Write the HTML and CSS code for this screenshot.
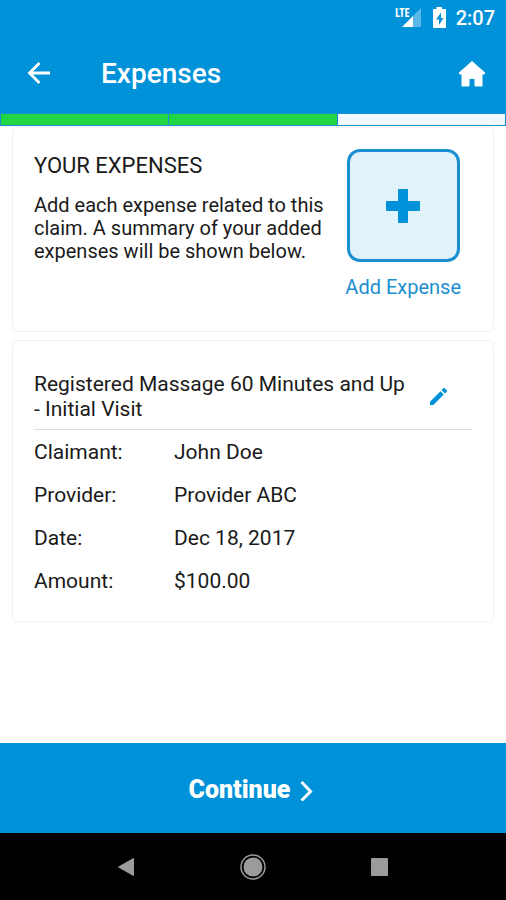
FILE: index.html
```html
<!DOCTYPE html>
<html lang="en">
<head>
<meta charset="utf-8">
<meta name="viewport" content="width=device-width, initial-scale=1">
<title>Expenses</title>
<link rel="stylesheet" href="styles.css">
</head>
<body>
<div class="screen">
  <div class="status-bar">
    <div class="signal">
      <span class="network">LTE</span>
      <svg class="signal-icon" width="19" height="19" viewBox="0 0 19 19" aria-hidden="true">
        <path d="M19 0v19H11V8z" fill="#fff" opacity=".35"/>
        <path d="M11 8v11H0z" fill="#fff"/>
      </svg>
    </div>
    <svg class="battery" width="13" height="21" viewBox="0 0 13 21" aria-hidden="true">
      <path d="M3.500 0h5.500v2H12q1 0 1 1v17q0 1-1 1H1q-1 0-1-1V3q0-1 1-1h2.500z" fill="#fff"/>
      <path d="M8 5.500 3 12.500h3V18l4.500-7H8z" fill="#0092d8"/>
    </svg>
    <span class="clock">2:07</span>
  </div>

  <header class="app-bar">
    <button class="icon-button" type="button" aria-label="Back">
      <svg width="24" height="24" viewBox="0 0 24 24" fill="none" stroke="#fff" stroke-width="2.800" aria-hidden="true">
        <path d="M23 11H2M12.500 1 2.500 11l10 10"/>
      </svg>
    </button>
    <h1 class="title">Expenses</h1>
    <button class="icon-button" type="button" aria-label="Home">
      <svg width="28" height="28" viewBox="0 0 28 28" aria-hidden="true">
        <path d="M14 1.500 27 13 26 14H24V26H17V18.500H11V26H4V14H2L1 13z" fill="#fff" stroke="#fff" stroke-width="1" stroke-linejoin="round"/>
      </svg>
    </button>
  </header>

  <div class="progress" role="progressbar" aria-label="Claim steps" aria-valuemin="0" aria-valuemax="3" aria-valuenow="2">
    <span class="step done"></span>
    <span class="step done"></span>
    <span class="step"></span>
  </div>

  <main class="content">
    <section class="card intro">
      <div class="intro-text">
        <h2 class="heading">YOUR EXPENSES</h2>
        <p class="description">Add each expense related to this claim. A summary of your added expenses will be shown below.</p>
      </div>
      <button class="add" type="button">
        <span class="add-box">
          <svg width="34" height="34" viewBox="0 0 34 34" fill="#0092d8" aria-hidden="true">
            <rect x="12" y="0" width="10" height="34" rx="1"/>
            <rect x="0" y="12" width="34" height="10" rx="1"/>
          </svg>
        </span>
        <span>Add Expense</span>
      </button>
    </section>

    <section class="card expense">
      <div class="expense-head">
        <h2 class="expense-name">Registered Massage 60 Minutes and Up - Initial Visit</h2>
        <button class="icon-button edit" type="button" aria-label="Edit expense">
          <svg width="18" height="18" viewBox="0 0 18 18" fill="#0092d8" aria-hidden="true">
            <path d="M0 13.700V17h3.300L13.800 6.500 10.500 3.200zM16.700 3.700c.4-.4.4-1 0-1.400L14.700.3c-.4-.4-1-.4-1.400 0l-1.800 1.800 3.400 3.400z"/>
          </svg>
        </button>
      </div>
      <dl class="details">
        <dt>Claimant:</dt><dd>John Doe</dd>
        <dt>Provider:</dt><dd>Provider ABC</dd>
        <dt>Date:</dt><dd>Dec 18, 2017</dd>
        <dt>Amount:</dt><dd>$100.00</dd>
      </dl>
    </section>
  </main>

  <button class="continue" type="button">
    <span>Continue</span>
    <svg width="13" height="22" viewBox="0 0 13 22" fill="none" stroke="#fff" stroke-width="3" aria-hidden="true">
      <path d="M1.500 3 10.500 12.500l-9 9"/>
    </svg>
  </button>

  <nav class="system-nav" aria-label="System">
    <button class="icon-button" type="button" aria-label="System back">
      <svg width="18" height="20" viewBox="0 0 18 20" aria-hidden="true">
        <path d="M1.500 10 16.500 1.500v17z" fill="#9b9b9b" stroke="#9b9b9b" stroke-linejoin="round"/>
      </svg>
    </button>
    <button class="icon-button" type="button" aria-label="System home">
      <svg width="26" height="26" viewBox="0 0 26 26" aria-hidden="true">
        <circle cx="13" cy="13" r="12" fill="none" stroke="#9b9b9b" stroke-width="1.500"/>
        <circle cx="13" cy="13" r="9.500" fill="#9b9b9b"/>
      </svg>
    </button>
    <button class="icon-button" type="button" aria-label="Recent apps">
      <svg width="18" height="18" viewBox="0 0 18 18" aria-hidden="true">
        <rect width="17" height="18" rx="1" fill="#9b9b9b"/>
      </svg>
    </button>
  </nav>
</div>
</body>
</html>
```
FILE: styles.css
```css
* { box-sizing: border-box; }

body {
  margin: 0;
  background: #fff;
  color: #1a1a1a;
  font: 400 20px/24px Roboto, sans-serif;
}

h1, h2, p, dl, dd { margin: 0; font-weight: 400; }

button {
  padding: 0;
  border: 0;
  background: none;
  color: inherit;
  font: inherit;
  cursor: pointer;
}

svg { display: block; }

.screen {
  display: flex;
  flex-direction: column;
  min-height: 100vh;
}

.status-bar {
  display: flex;
  justify-content: flex-end;
  align-items: center;
  gap: 12px;
  height: 35px;
  padding: 0 11px 0 12px;
  background: #0092d8;
  color: #fff;
}

.signal { display: flex; align-items: flex-start; }

.network {
  margin-right: -8px;
  font: 700 12px/10px "Open Sans Condensed", "Roboto Condensed", Roboto, sans-serif;
}

.clock { margin-left: -2px; font-weight: 500; }

.app-bar {
  display: flex;
  align-items: center;
  height: 78px;
  padding: 0 20px 0 27px;
  background: #0092d8;
  color: #fff;
}

.title {
  flex: 1;
  margin-left: 50px;
  font-size: 28px;
  line-height: 32px;
  font-weight: 500;
}

.progress {
  display: flex;
  gap: 1px;
  height: 13px;
  padding: 1px;
  background: #1c8fd0;
}

.step { flex: 1; background: #effaff; }
.done { background: #21d644; }

.content {
  flex: 1;
  display: flex;
  flex-direction: column;
  gap: 8px;
  padding: 1px 12px 24px;
}

.card {
  border: 1px solid #f2f2f2;
  border-radius: 5px;
  background: #fff;
}

.intro {
  display: flex;
  justify-content: space-between;
  padding: 21px 32px 32px 21px;
}

.intro-text { flex: 1; }

.heading { font-size: 22px; line-height: 34px; }
.description { margin-top: 11px; line-height: 23px; }

.add {
  display: flex;
  flex-direction: column;
  align-items: center;
  gap: 13px;
  color: #1c8fd0;
}

.add-box {
  display: grid;
  place-items: center;
  width: 113px;
  height: 113px;
  border: 3px solid #1c8fd0;
  border-radius: 13px;
  background: #e1f2fb;
}

.expense { padding: 31px 21px 28px; }

.expense-head {
  display: flex;
  align-items: center;
  justify-content: space-between;
  gap: 16px;
  padding: 0 24px 7px 0;
  border-bottom: 1px solid #dcdcdc;
}

.expense-name { flex: 1; font-size: 21px; line-height: 25px; }

.details {
  display: grid;
  grid-template-columns: 140px 1fr;
  row-gap: 19px;
  padding-top: 10px;
  font-size: 21px;
}

.continue {
  display: flex;
  align-items: center;
  justify-content: center;
  gap: 10px;
  height: 90px;
  padding: 3px 4px 0 0;
  background: #0092d8;
  color: #fff;
  font-size: 25px;
  font-weight: 900;
}

.system-nav {
  display: grid;
  grid-template-columns: repeat(3, 1fr);
  align-items: center;
  justify-items: center;
  height: 67px;
  padding: 0 63px;
  background: #000;
}
```
